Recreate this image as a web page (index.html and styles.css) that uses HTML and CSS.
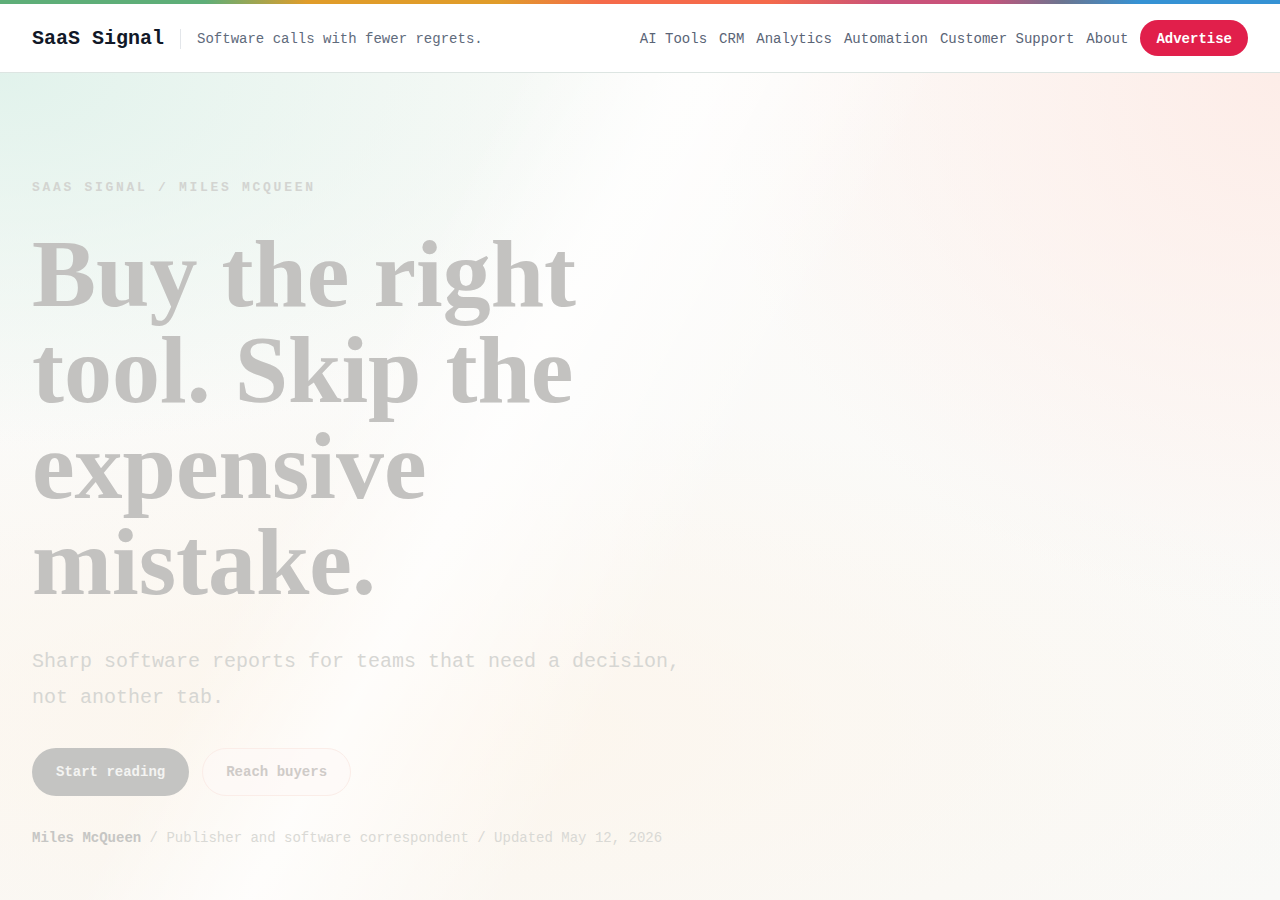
FILE: index.html
```html
<!DOCTYPE html>
<html lang="en">
<head>
<meta charset="utf-8">
<title>SaaS Signal</title>
<link rel="stylesheet" href="styles.css">
</head>
<body>
<div class="topbar"></div>
<header class="site-header">
  <div class="brand">
    <a class="logo" href="#">SaaS Signal</a>
    <span class="tagline">Software calls with fewer regrets.</span>
  </div>
  <nav class="nav">
    <a class="nav-link" href="#">AI Tools</a>
    <a class="nav-link" href="#">CRM</a>
    <a class="nav-link" href="#">Analytics</a>
    <a class="nav-link" href="#">Automation</a>
    <a class="nav-link" href="#">Customer Support</a>
    <a class="nav-link" href="#">About</a>
    <a class="btn-advertise" href="#">Advertise</a>
  </nav>
</header>
<main class="hero">
  <div class="hero-inner">
    <p class="eyebrow">SaaS Signal / Miles McQueen</p>
    <h1 class="headline">Buy the right tool. Skip the expensive mistake.</h1>
    <p class="lede">Sharp software reports for teams that need a decision, not another tab.</p>
    <div class="actions">
      <a class="btn btn-primary" href="#">Start reading</a>
      <a class="btn btn-ghost" href="#">Reach buyers</a>
    </div>
    <p class="meta"><strong>Miles McQueen</strong> / Publisher and software correspondent / Updated May 12, 2026</p>
  </div>
</main>
</body>
</html>
```

FILE: styles.css
```css
* { box-sizing: border-box; }
html, body { margin: 0; padding: 0; }
body {
  font-family: "Liberation Mono", "DejaVu Sans Mono", monospace;
  background: #fbf9f7;
  color: #0f172a;
  min-height: 900px;
}
a { text-decoration: none; color: inherit; }

.topbar {
  height: 4px;
  background: linear-gradient(90deg,
    #5eae78 0%, #5eae78 16%,
    #e09c2a 24%, #e09c2a 39%,
    #f56a4a 47%, #f56a4a 60%,
    #c9527a 69%, #c9527a 77%,
    #6b7590 83%, #3592d4 89%, #3592d4 100%);
}

.site-header {
  height: 69px;
  padding: 0 32px;
  display: flex;
  align-items: center;
  justify-content: space-between;
  background: #ffffff;
  border-bottom: 1px solid #dde5e2;
}
.brand { display: flex; align-items: center; padding-top: 2px; }
.logo {
  font-size: 20px;
  font-weight: 700;
  color: #111827;
  line-height: 24px;
}
.tagline {
  margin-left: 16px;
  padding-left: 16px;
  border-left: 1px solid #e3e6ea;
  font-size: 14px;
  line-height: 20px;
  color: #5f6b7c;
}
.nav { display: flex; align-items: center; gap: 12px; }
.nav-link {
  padding-top: 2px;
  font-size: 14px;
  line-height: 20px;
  color: #5a6476;
}
.btn-advertise {
  height: 36px;
  padding: 2px 16px 0;
  border-radius: 18px;
  background: #e11f4b;
  color: #ffffff;
  font-size: 14px;
  font-weight: 700;
  display: flex;
  align-items: center;
}

.hero {
  min-height: 827px;
  background:
    linear-gradient(118deg, rgba(255,255,255,0) 30%, rgba(255,255,255,0.75) 40%, rgba(255,255,255,0) 55%),
    radial-gradient(ellipse 55% 45% at 0% 0%, rgba(224,242,235,0.95), rgba(224,242,235,0) 100%),
    radial-gradient(ellipse 45% 65% at 100% 0%, rgba(253,236,231,0.95), rgba(253,236,231,0) 100%),
    radial-gradient(ellipse 80% 40% at 30% 80%, rgba(253,245,235,0.9), rgba(253,245,235,0) 100%),
    linear-gradient(180deg, #fcfbf9 0%, #f9f9f7 100%);
  padding: 107px 32px 40px;
}
.hero-inner { max-width: 700px; }

.eyebrow {
  margin: 0 0 30px;
  font-size: 13px;
  line-height: 16px;
  font-weight: 700;
  letter-spacing: 0.208em;
  text-transform: uppercase;
  color: #d3d4d1;
}
.headline {
  margin: 0 0 34px;
  max-width: 680px;
  font-family: "Liberation Serif", "Times New Roman", serif;
  font-size: 96px;
  line-height: 96px;
  font-weight: 700;
  color: #c3c2c0;
}
.lede {
  margin: 0 0 32px;
  max-width: 680px;
  font-size: 20px;
  line-height: 36px;
  color: #d6d6d3;
}
.actions { display: flex; gap: 13px; }
.btn {
  height: 48px;
  padding: 0 23px;
  border-radius: 24px;
  display: flex;
  align-items: center;
  font-size: 14px;
  font-weight: 700;
  border: 1px solid transparent;
}
.btn-primary {
  background: #c4c4c2;
  color: #f4f4f2;
}
.btn-ghost {
  background: rgba(253,248,246,0.6);
  border-color: #fbede8;
  color: #cfcbc8;
}
.meta {
  margin: 32px 0 0;
  font-size: 14px;
  line-height: 20px;
  color: #d9d9d5;
}
.meta strong { color: #c6c6c4; font-weight: 700; }
```
